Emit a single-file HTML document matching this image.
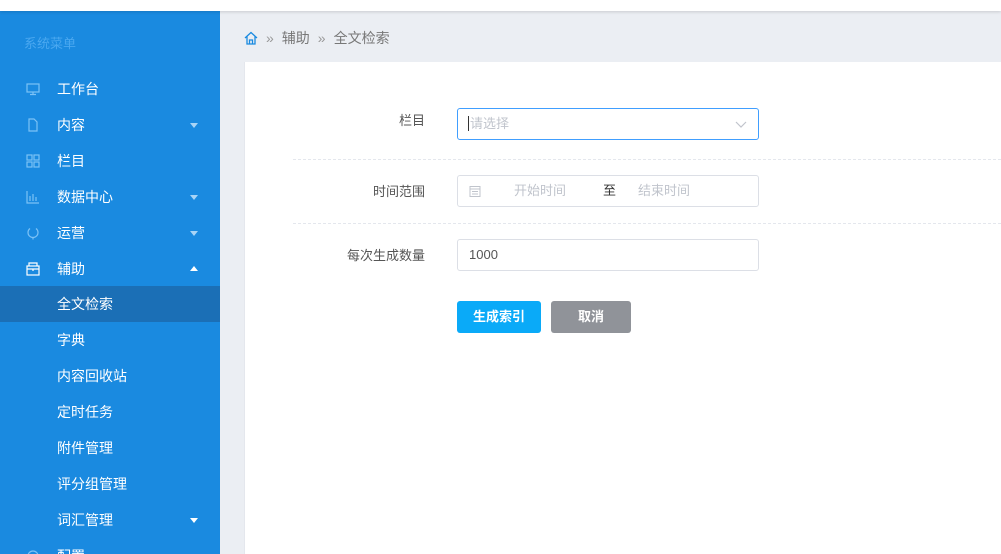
<!DOCTYPE html>
<html><head><meta charset="utf-8"><style>
*{margin:0;padding:0;box-sizing:border-box}
html{width:1001px;height:554px;overflow:hidden}
body{width:1001px;height:554px;overflow:hidden;background:#ebeef3;font-family:"Liberation Sans","Noto Sans CJK SC",sans-serif;position:relative}
.top{position:absolute;left:0;top:0;width:1001px;height:11px;background:#fff;box-shadow:0 1px 3px rgba(0,0,0,.15);z-index:2}
.side{position:absolute;left:0;top:11px;width:220px;height:543px;background:#1a8ae0;color:#fff;font-size:14px;overflow:hidden}
.title{position:absolute;left:24px;top:22px;font-size:13px;color:#4aa8f0}
.item{position:absolute;left:0;width:220px;height:36px;line-height:36px}
.item .t{position:absolute;left:57px}
.item svg{position:absolute;left:26px;top:11px}
.arr{position:absolute;left:190px;top:16px;width:0;height:0;border-left:4px solid transparent;border-right:4px solid transparent;border-top:5px solid #a8d4f6}
.arr.up{border-top:none;border-bottom:5px solid #fff;top:15px}
.arr.w{border-top-color:#fff}
.act{background:#1b6fb6}
.crumb{position:absolute;left:244px;top:28px;font-size:14px;color:#777}
.card{position:absolute;left:244px;top:62px;width:757px;height:492px;background:#fff;border-left:1px solid #e4e7ed}
.lab{position:absolute;font-size:13px;color:#555;text-align:right;width:200px;left:225px}
.inp{position:absolute;left:457px;width:302px;height:32px;border:1px solid #dcdfe6;border-radius:3px;font-size:13px;line-height:30px}
.dash{position:absolute;left:293px;right:0;border-top:1px dashed #e4e7ed}
.btn{position:absolute;top:301px;height:32px;line-height:32px;color:#fff;font-size:13px;text-align:center;border-radius:3px;font-weight:bold}
</style></head><body>
<div class="top"></div>
<div class="side">
<div class="title">系统菜单</div>
<div class="item" style="top:60px"><svg width="14" height="14" viewBox="0 0 14 14" fill="none" stroke="#7cc2f6" stroke-width="1.2"><rect x="1" y="2" width="12" height="8"/><path d="M7 10v2M4 12.5h6"/></svg><span class="t">工作台</span></div>
<div class="item" style="top:96px"><svg width="14" height="14" viewBox="0 0 14 14" fill="none" stroke="#7cc2f6" stroke-width="1.2"><path d="M3 1h5l3 3v9H3z"/></svg><span class="t">内容</span><i class="arr"></i></div>
<div class="item" style="top:132px"><svg width="14" height="14" viewBox="0 0 14 14" fill="none" stroke="#7cc2f6" stroke-width="1.2"><rect x="1" y="1" width="5" height="5"/><rect x="8" y="1" width="5" height="5"/><rect x="1" y="8" width="5" height="5"/><rect x="8" y="8" width="5" height="5"/></svg><span class="t">栏目</span></div>
<div class="item" style="top:168px"><svg width="14" height="14" viewBox="0 0 14 14" fill="none" stroke="#7cc2f6" stroke-width="1.2"><path d="M1 1v12h12M4 11V6M7 11V4M10 11V7"/></svg><span class="t">数据中心</span><i class="arr"></i></div>
<div class="item" style="top:204px"><svg width="14" height="14" viewBox="0 0 14 14" fill="none" stroke="#7cc2f6" stroke-width="1.2"><path d="M4 2.5A5 5 0 1 0 10 2.5M7 12v1.5"/></svg><span class="t">运营</span><i class="arr"></i></div>
<div class="item" style="top:240px"><svg width="14" height="14" viewBox="0 0 14 14" fill="none" stroke="#fff" stroke-width="1.2"><rect x="1" y="4" width="12" height="9"/><path d="M3 4V1h8v3M1 7h12M7 7v2"/></svg><span class="t">辅助</span><i class="arr up"></i></div>
<div class="item act" style="top:275px"><span class="t">全文检索</span></div>
<div class="item" style="top:311px"><span class="t">字典</span></div>
<div class="item" style="top:347px"><span class="t">内容回收站</span></div>
<div class="item" style="top:383px"><span class="t">定时任务</span></div>
<div class="item" style="top:419px"><span class="t">附件管理</span></div>
<div class="item" style="top:455px"><span class="t">评分组管理</span></div>
<div class="item" style="top:491px"><span class="t">词汇管理</span><i class="arr w"></i></div>
<div class="item" style="top:527px"><svg width="14" height="14" viewBox="0 0 14 14" fill="none" stroke="#7cc2f6" stroke-width="1.2"><circle cx="7" cy="7" r="5"/></svg><span class="t">配置</span><i class="arr"></i></div>
</div>
<div class="crumb"><svg width="14" height="14" viewBox="0 0 14 14" fill="none" stroke="#1a8ae0" stroke-width="1.3" style="vertical-align:-2px"><path d="M1 7L7 1.5 13 7M3 5.5V13h8V5.5M5.5 13V9h3v4"/></svg><span style="margin:0 8px;color:#999">»</span>辅助<span style="margin:0 8px;color:#999">»</span>全文检索</div>
<div class="card"></div>
<div class="lab" style="top:110px">栏目</div>
<div class="inp" style="top:108px;border-color:#409eff;color:#c0c4cc;padding-left:10px"><span style="border-left:1px solid #333;padding-left:1px">请选择</span><svg width="12" height="8" viewBox="0 0 12 8" style="position:absolute;right:11px;top:12px" fill="none" stroke="#c0c4cc" stroke-width="1.2"><path d="M1 1l5 5 5-5"/></svg></div>
<div class="dash" style="top:159px"></div>
<div class="lab" style="top:181px">时间范围</div>
<div class="inp" style="top:175px;color:#c0c4cc"><svg width="12" height="12" viewBox="0 0 12 12" style="position:absolute;left:11px;top:9px" fill="none" stroke="#c0c4cc"><rect x="1" y="1.5" width="10" height="10"/><path d="M1 4h10M3 6.5h6M3 9h6"/></svg><span style="position:absolute;left:56px">开始时间</span><span style="position:absolute;left:145px;color:#333">至</span><span style="position:absolute;left:180px">结束时间</span></div>
<div class="dash" style="top:223px"></div>
<div class="lab" style="top:245px">每次生成数量</div>
<div class="inp" style="top:239px;color:#555;padding-left:11px">1000</div>
<div class="btn" style="left:457px;width:84px;background:#0aaaf8">生成索引</div>
<div class="btn" style="left:551px;width:80px;background:#909399">取消</div>
</body></html>
